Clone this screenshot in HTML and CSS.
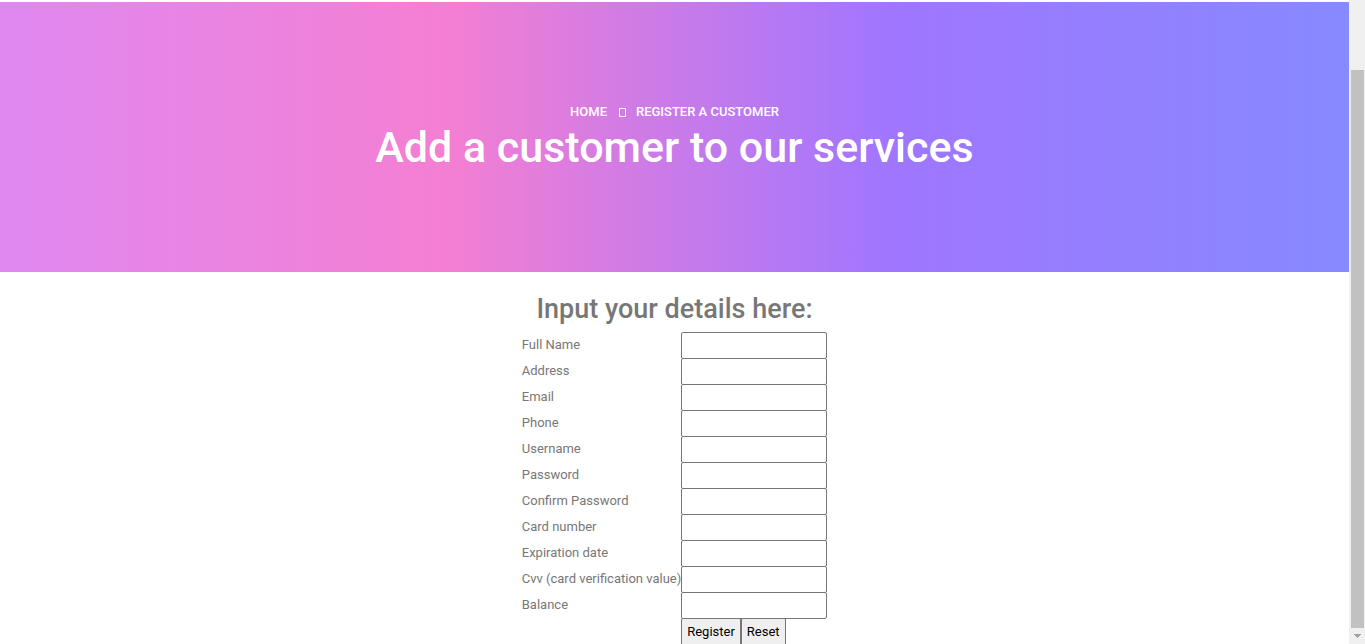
FILE: index.html
```html
<!DOCTYPE html>
<html lang="en">
<head>
<meta charset="utf-8">
<title>Register a customer</title>
<link rel="stylesheet" href="styles.css">
</head>
<body>
<div class="page">
  <header class="banner">
    <nav class="crumbs"><a href="#">Home</a><span class="separator"></span><span>Register a customer</span></nav>
    <h1>Add a customer to our services</h1>
  </header>
  <main class="content">
    <h2>Input your details here:</h2>
    <form>
      <table class="fields">
        <tr><td><label for="name">Full Name</label></td><td><input id="name" type="text"></td></tr>
        <tr><td><label for="address">Address</label></td><td><input id="address" type="text"></td></tr>
        <tr><td><label for="email">Email</label></td><td><input id="email" type="text"></td></tr>
        <tr><td><label for="phone">Phone</label></td><td><input id="phone" type="text"></td></tr>
        <tr><td><label for="username">Username</label></td><td><input id="username" type="text"></td></tr>
        <tr><td><label for="password">Password</label></td><td><input id="password" type="password"></td></tr>
        <tr><td><label for="confirm">Confirm Password</label></td><td><input id="confirm" type="password"></td></tr>
        <tr><td><label for="card">Card number</label></td><td><input id="card" type="text"></td></tr>
        <tr><td><label for="expiry">Expiration date</label></td><td><input id="expiry" type="text"></td></tr>
        <tr><td><label for="cvv">Cvv (card verification value)</label></td><td><input id="cvv" type="text"></td></tr>
        <tr><td><label for="balance">Balance</label></td><td><input id="balance" type="text"></td></tr>
        <tr><td></td><td><div class="actions"><button type="submit">Register</button><button type="reset">Reset</button></div></td></tr>
      </table>
    </form>
  </main>
</div>
<div class="scrollbar" aria-hidden="true">
  <div class="thumb"></div>
  <svg class="arrow" width="16" height="16" viewBox="0 0 16 16" shape-rendering="crispEdges"><path d="M5 6h7v1h-1v1h-1v1H9v1H8V9H7V8H6V7H5z" fill="#a3a3a3"/></svg>
</div>
</body>
</html>
```
FILE: styles.css
```css
* {
  box-sizing: border-box;
}

body {
  margin: 0;
  height: 100vh;
  display: flex;
  overflow: hidden;
  background: #fff;
  color: #777;
  font: 400 13px/26px Roboto, sans-serif;
}

.page {
  flex: 1;
  overflow: hidden;
  padding-top: 2px;
}

.banner {
  padding: 97px 16px 103px;
  text-align: center;
  color: #fff;
  background: linear-gradient(90deg, #e088f1 0%, #f47fd2 33%, #a076ff 66%, #8789ff 100%);
}

.crumbs {
  display: flex;
  justify-content: center;
  align-items: center;
  font-weight: 500;
  text-transform: uppercase;
}

.crumbs a {
  color: inherit;
  text-decoration: none;
}

.separator {
  width: 7px;
  height: 9px;
  margin: 0 10px 0 12px;
  border: 1px solid #fff;
}

h1 {
  margin: 0;
  font-size: 43px;
  font-weight: 500;
  line-height: 44px;
}

.content {
  padding-top: 21px;
}

h2 {
  margin: 0 0 7px;
  text-align: center;
  font-size: 27px;
  font-weight: 500;
  line-height: 32px;
}

.fields {
  margin: 0 auto;
  border-collapse: collapse;
}

.fields td {
  height: 26px;
  padding: 0;
  vertical-align: top;
}

label,
input {
  display: block;
}

input {
  width: 146px;
  height: 27px;
  margin: 0 0 -1px;
  padding: 1px 2px;
  font: inherit;
  border: 1px solid #767676;
  border-radius: 2px;
  background: #fff;
}

.actions {
  display: flex;
}

button {
  height: 28px;
  margin: 0;
  padding: 0 5px;
  font: inherit;
  color: #000;
  border: 1px solid #767676;
  border-radius: 2px;
  background: #efefef;
}

.scrollbar {
  width: 16px;
  display: flex;
  flex-direction: column;
  padding-top: 70px;
  background: #f0f0f0;
}

.thumb {
  flex: 1;
  margin: 0 1px 0 2px;
  background: #c1c1c1;
}
```
